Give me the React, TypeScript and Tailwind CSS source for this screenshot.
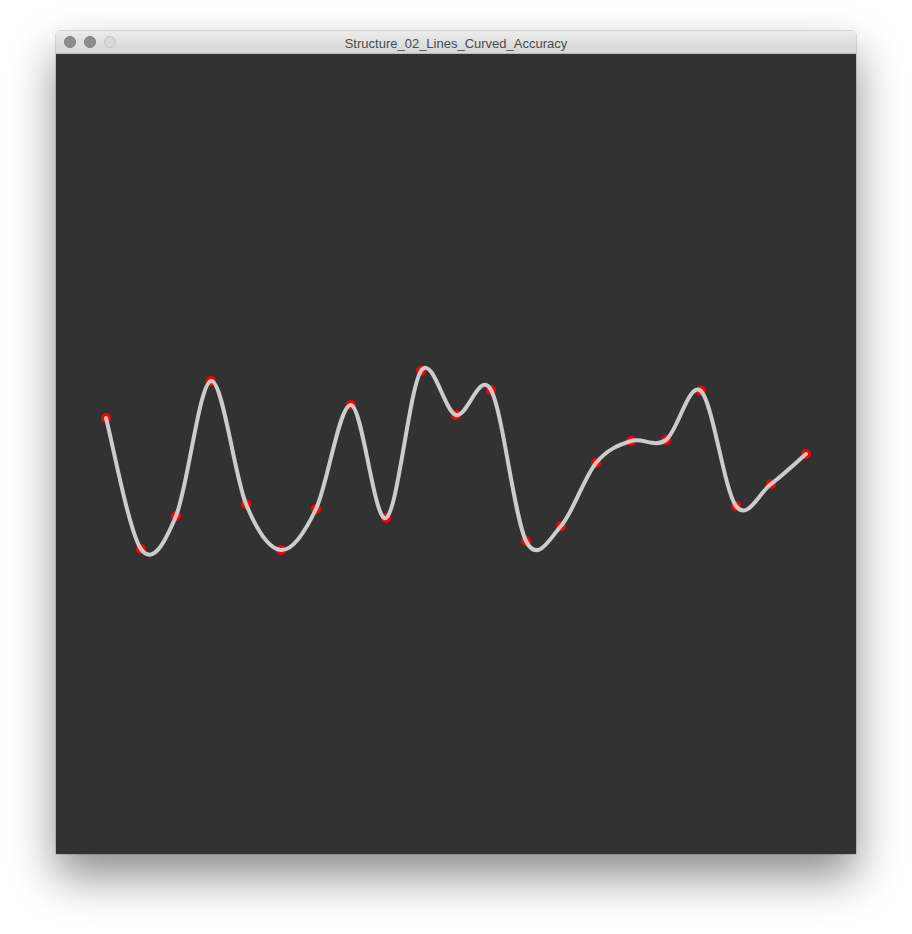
import React from "react";

const ys = [364, 495, 462, 327, 450, 496, 455, 351, 464, 317, 361, 336, 487, 472, 409, 387, 386, 337, 452, 430, 400];
const pts = ys.map((y, i) => ({ x: 50 + 35 * i, y }));

// catmull-rom through all points, ends doubled
function curvePath() {
  const p = [pts[0], ...pts, pts[pts.length - 1]];
  let d = `M${pts[0].x} ${pts[0].y}`;
  for (let i = 1; i < p.length - 2; i++) {
    const p0 = p[i - 1], p1 = p[i], p2 = p[i + 1], p3 = p[i + 2];
    const c1x = p1.x + (p2.x - p0.x) / 6;
    const c1y = p1.y + (p2.y - p0.y) / 6;
    const c2x = p2.x - (p3.x - p1.x) / 6;
    const c2y = p2.y - (p3.y - p1.y) / 6;
    d += ` C${c1x} ${c1y} ${c2x} ${c2y} ${p2.x} ${p2.y}`;
  }
  return d;
}

export default function App() {
  return (
    <div className="min-h-screen w-full bg-white pl-[56px] pt-[31px]">
      <div className="w-[800px] rounded-t-[5px] shadow-[0_22px_45px_rgba(0,0,0,0.45),0_0_0_1px_rgba(0,0,0,0.12)]">
        <div className="relative flex h-[23px] items-center justify-center rounded-t-[5px] border-b border-[#b9b9b9] bg-gradient-to-b from-[#ececec] to-[#d6d6d6]">
          <div className="absolute left-[8px] top-[5px] flex gap-[8px]">
            <span className="block h-[12px] w-[12px] rounded-full border border-[#7d7d7d] bg-[#8d8d8d]" />
            <span className="block h-[12px] w-[12px] rounded-full border border-[#7d7d7d] bg-[#8d8d8d]" />
            <span className="block h-[12px] w-[12px] rounded-full border border-[#c4c4c4] bg-[#d9d9d9]" />
          </div>
          <span className="pt-[2px] text-[13px] leading-none text-[#4a4a4a] [font-family:'Liberation_Sans',Arial,sans-serif]">
            Structure_02_Lines_Curved_Accuracy
          </span>
        </div>
        <div className="h-[800px] w-[800px] bg-[#323232]">
          <svg width="800" height="800" viewBox="0 0 800 800">
            {pts.map((p, i) => (
              <circle key={i} cx={p.x} cy={p.y} r={5} fill="#ff0000" />
            ))}
            <path d={curvePath()} fill="none" stroke="#cccccc" strokeWidth={4} strokeLinecap="round" />
          </svg>
        </div>
      </div>
    </div>
  );
}
